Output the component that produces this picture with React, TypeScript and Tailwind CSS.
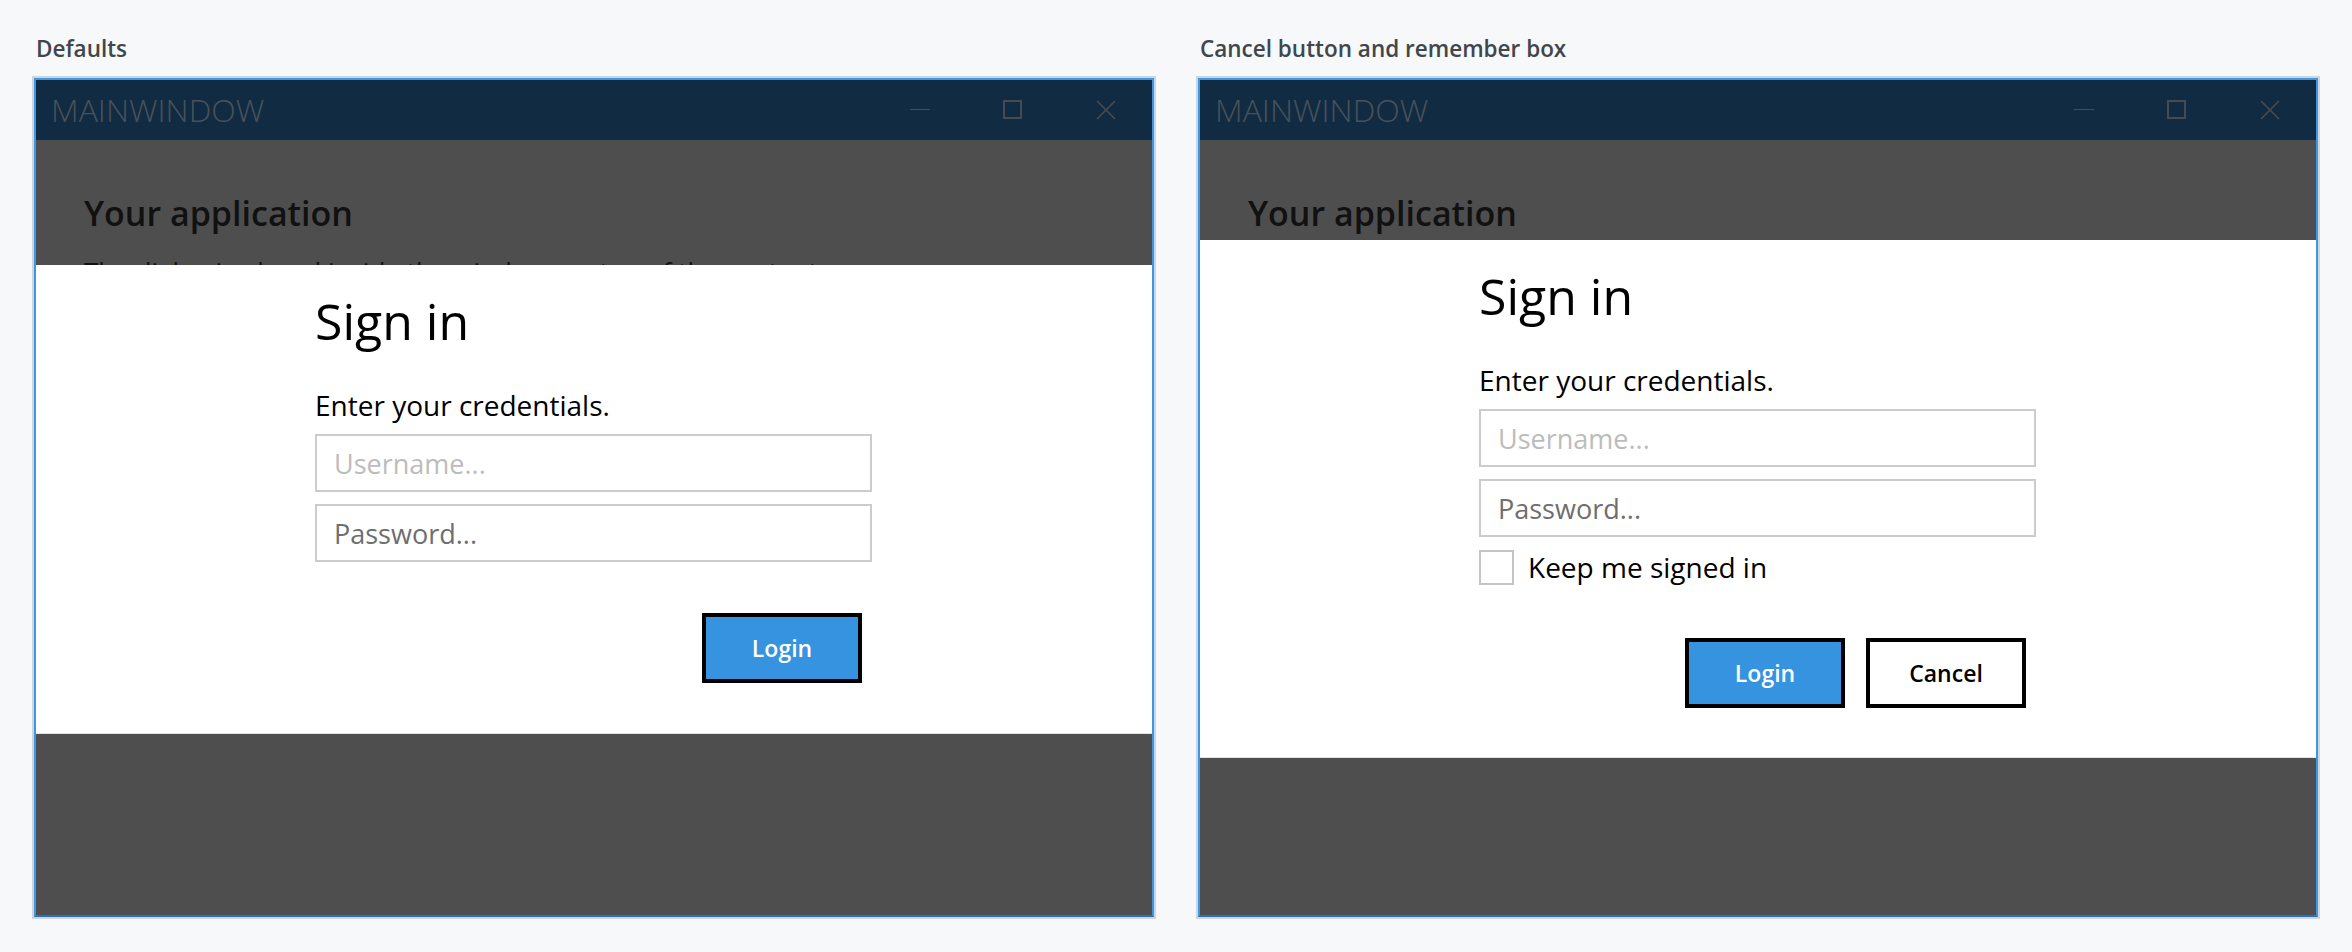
import React from "react";

function TitleBar() {
  return (
    <div className="h-[60px] bg-[#112b42] flex items-center justify-between">
      <div className="pl-[15px] text-[32px] font-light leading-[60px] text-[#48525c]">
        MAINWINDOW
      </div>
      <div className="flex h-full">
        <div className="w-[93px] h-full flex items-center justify-center">
          <svg width="20" height="20" viewBox="0 0 20 20">
            <line x1="0" y1="9.5" x2="20" y2="9.5" stroke="#454d56" strokeWidth="1" />
          </svg>
        </div>
        <div className="w-[93px] h-full flex items-center justify-center">
          <svg width="20" height="20" viewBox="0 0 20 20">
            <rect x="1" y="1" width="17" height="17" fill="none" stroke="#464b51" strokeWidth="2" />
          </svg>
        </div>
        <div className="w-[93px] h-full flex items-center justify-center">
          <svg width="20" height="20" viewBox="0 0 20 20">
            <line x1="1" y1="1" x2="19" y2="19" stroke="#464b51" strokeWidth="1.7" />
            <line x1="19" y1="1" x2="1" y2="19" stroke="#464b51" strokeWidth="1.7" />
          </svg>
        </div>
      </div>
    </div>
  );
}

function Dialog({ withCancel }: { withCancel: boolean }) {
  return (
    <div
      className={
        "absolute left-0 right-0 bg-white border-b border-[#e4e4e4] " +
        (withCancel ? "top-[100px]" : "top-[125px]")
      }
    >
      <div className="ml-[279px] w-[557px] pt-[28px] flex flex-col">
        <div className="text-[50px] leading-[56px] text-black">Sign in</div>
        <div className="mt-[39px] text-[28px] leading-[34px] text-black">
          Enter your credentials.
        </div>
        <input
          type="text"
          placeholder="Username..."
          className="mt-[12px] h-[58px] w-full border-2 border-[#cccccc] bg-white px-[17px] text-[27px] outline-none placeholder:text-[#bcbcbc]"
        />
        <input
          type="password"
          placeholder="Password..."
          className="mt-[12px] h-[58px] w-full border-2 border-[#cccccc] bg-white px-[17px] text-[27px] outline-none placeholder:text-[#6e6e6e]"
        />
        {withCancel && (
          <div className="mt-[13px] flex items-center h-[35px]">
            <span className="block w-[35px] h-[35px] border-2 border-[#c4c4c4] bg-white" />
            <span className="ml-[14px] text-[28px] leading-[35px] text-black">
              Keep me signed in
            </span>
          </div>
        )}
        <div
          className={
            "flex justify-end gap-[21px] mr-[10px] " +
            (withCancel ? "mt-[53px] pb-[49px]" : "mt-[51px] pb-[50px]")
          }
        >
          <button className="w-[160px] h-[70px] border-4 border-black bg-[#3593df] text-white text-[23px] font-semibold">
            Login
          </button>
          {withCancel && (
            <button className="w-[160px] h-[70px] border-4 border-black bg-white text-black text-[23px] font-semibold">
              Cancel
            </button>
          )}
        </div>
      </div>
    </div>
  );
}

function Window({ withCancel }: { withCancel: boolean }) {
  return (
    <div className="border-2 border-[#d0d5db]">
      <div className="border-2 border-[#3f97e4] border-b-[#2a71bb]">
        <TitleBar />
        <div className="relative h-[775px] bg-[#4e4e4e] overflow-hidden">
          <div className="pl-[48px] pt-[53px]">
            <div className="text-[34px] leading-[40px] font-semibold text-[#111111]">
              Your application
            </div>
            {!withCancel && (
              <div className="mt-[22px] text-[26px] leading-[32px] text-[#111111]">
                The dialog is placed inside the window, on top of the content.
              </div>
            )}
          </div>
          <Dialog withCancel={withCancel} />
        </div>
      </div>
    </div>
  );
}

export default function App() {
  return (
    <div className="w-[2352px] h-[952px] bg-[#f7f8fa] px-[32px] pt-[35px] flex gap-[40px] font-['Open_Sans',sans-serif]">
      <div className="w-[1124px] flex flex-col">
        <div className="pl-[4px] text-[22.5px] leading-[28px] font-semibold text-[#41464c]">Defaults</div>
        <div className="mt-[13px]">
          <Window withCancel={false} />
        </div>
      </div>
      <div className="w-[1124px] flex flex-col">
        <div className="pl-[4px] text-[22.5px] leading-[28px] font-semibold text-[#41464c]">
          Cancel button and remember box
        </div>
        <div className="mt-[13px]">
          <Window withCancel={true} />
        </div>
      </div>
    </div>
  );
}
